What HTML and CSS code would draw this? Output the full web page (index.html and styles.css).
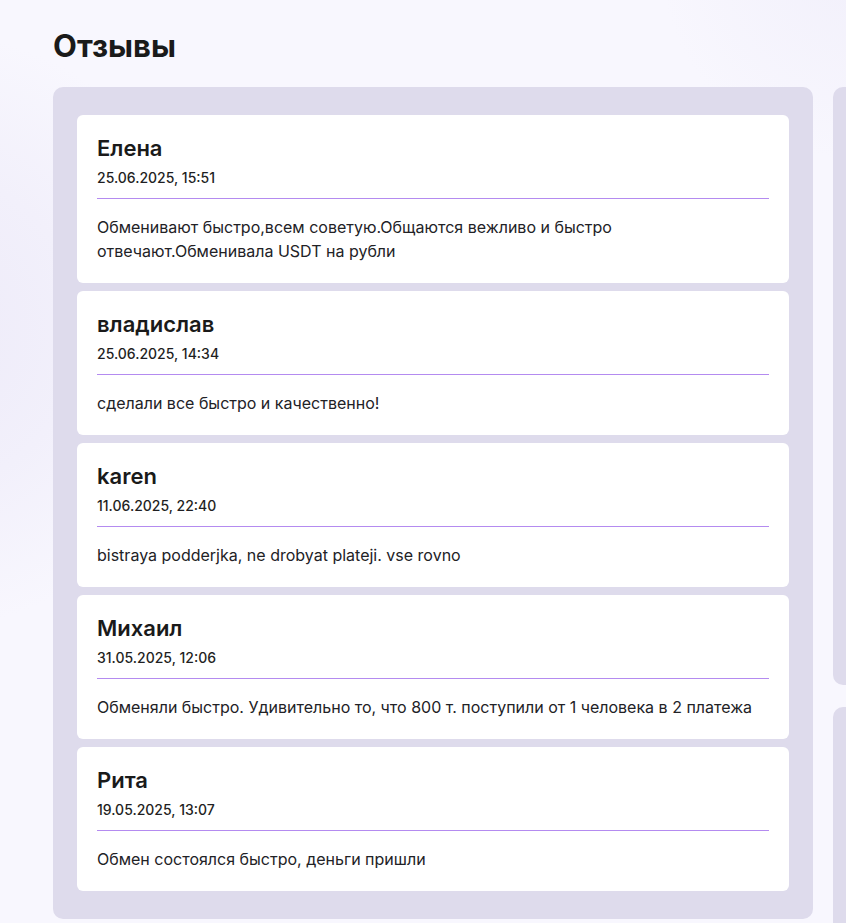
FILE: index.html
```html
<!DOCTYPE html>
<html lang="ru">
<head>
<meta charset="utf-8">
<title>Отзывы</title>
<link rel="stylesheet" href="styles.css">
</head>
<body>
<div class="page">
  <h1 class="title">Отзывы</h1>
  <div class="layout">
    <section class="reviews">
      <article class="card">
        <div class="name">Елена</div>
        <div class="date">25.06.2025, 15:51</div>
        <div class="divider"></div>
        <p class="text">Обменивают быстро,всем советую.Общаются вежливо и быстро отвечают.Обменивала USDT на рубли</p>
      </article>
      <article class="card">
        <div class="name">владислав</div>
        <div class="date">25.06.2025, 14:34</div>
        <div class="divider"></div>
        <p class="text">сделали все быстро и качественно!</p>
      </article>
      <article class="card">
        <div class="name">karen</div>
        <div class="date">11.06.2025, 22:40</div>
        <div class="divider"></div>
        <p class="text">bistraya podderjka, ne drobyat plateji. vse rovno</p>
      </article>
      <article class="card">
        <div class="name">Михаил</div>
        <div class="date">31.05.2025, 12:06</div>
        <div class="divider"></div>
        <p class="text">Обменяли быстро. Удивительно то, что 800 т. поступили от 1 человека в 2 платежа</p>
      </article>
      <article class="card">
        <div class="name">Рита</div>
        <div class="date">19.05.2025, 13:07</div>
        <div class="divider"></div>
        <p class="text">Обмен состоялся быстро, деньги пришли</p>
      </article>
    </section>
    <aside class="side">
      <div class="side-panel side-top"></div>
      <div class="side-panel side-bottom"></div>
    </aside>
  </div>
</div>
</body>
</html>
```
FILE: styles.css
```css
html, body {
  margin: 0;
  padding: 0;
}
body {
  background: #f8f7fe;
  background-image:
    radial-gradient(circle at -80px 330px, rgba(236, 233, 248, 0.9) 0, rgba(236, 233, 248, 0.5) 160px, rgba(248, 247, 254, 0) 300px),
    radial-gradient(circle at 860px -40px, rgba(240, 238, 250, 0.8) 0, rgba(248, 247, 254, 0) 200px);
  font-family: Inter, "Noto Sans", sans-serif;
  color: #1b1b1f;
  overflow: hidden;
  height: 923px;
}
.page {
  padding: 29px 0 0 53px;
}
.title {
  margin: 0 0 24px;
  font-size: 31px;
  line-height: 34px;
  font-weight: 700;
  color: #1a1a1a;
}
.layout {
  display: flex;
  gap: 20px;
  align-items: flex-start;
}
.reviews {
  flex: 0 0 760px;
  box-sizing: border-box;
  background: #dedbec;
  border-radius: 10px;
  padding: 28px 24px;
  display: flex;
  flex-direction: column;
  gap: 8px;
}
.card {
  background: #ffffff;
  border-radius: 6px;
  padding: 20px;
}
.name {
  font-size: 22px;
  line-height: 26px;
  font-weight: 600;
  color: #1a1a1a;
}
.date {
  margin-top: 7px;
  font-size: 14px;
  line-height: 20px;
  font-weight: 500;
  color: #1f1f23;
}
.divider {
  margin-top: 10px;
  height: 1px;
  background: #b48bf0;
}
.text {
  margin: 16px 0 0;
  font-size: 16px;
  line-height: 24px;
  font-weight: 400;
  color: #222226;
  max-width: 540px;
}
.card:nth-child(4) .text {
  max-width: none;
}
.side {
  flex: 0 0 400px;
  display: flex;
  flex-direction: column;
  gap: 22px;
}
.side-panel {
  background: #dedbec;
  border-radius: 10px;
}
.side-top {
  height: 598px;
}
.side-bottom {
  height: 400px;
}
```
